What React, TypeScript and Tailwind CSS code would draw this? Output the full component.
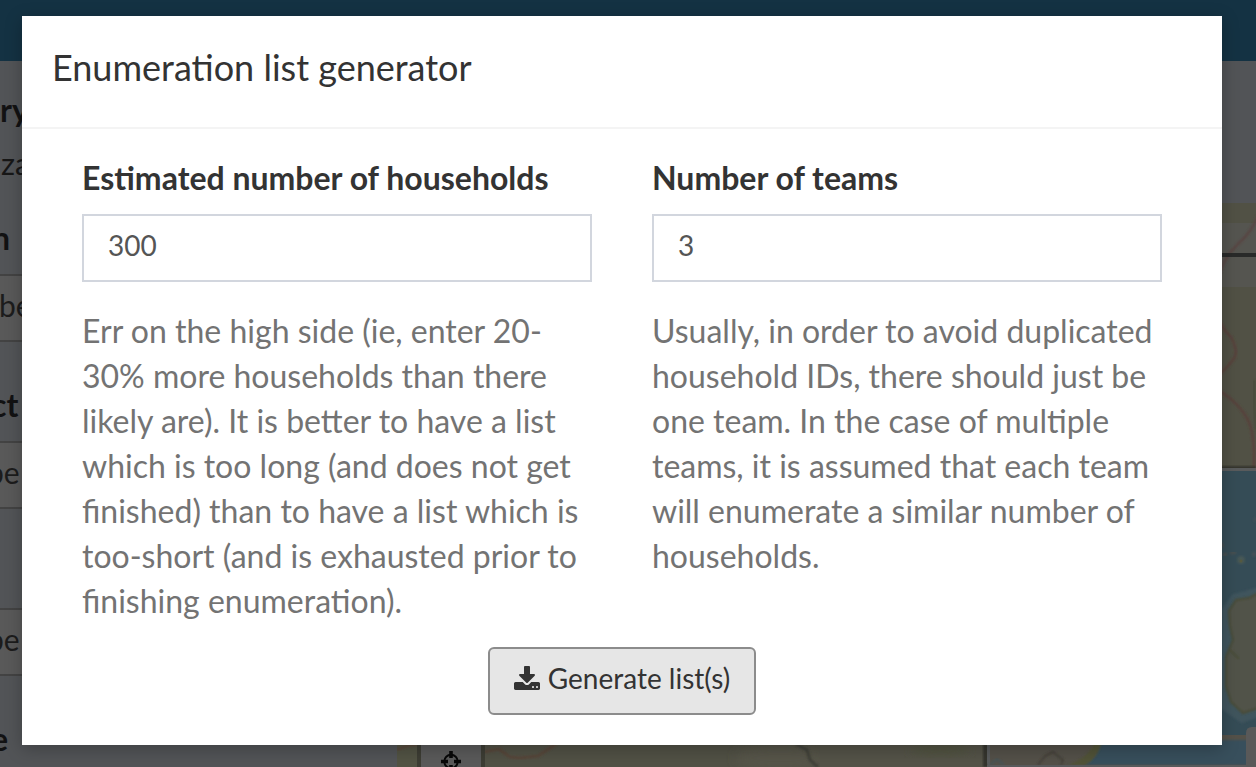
import React from "react";

function DownloadIcon() {
  return (
    <svg width="26" height="24" viewBox="0 0 1664 1536" fill="currentColor" aria-hidden="true">
      <path d="M1280 1344q0-26-19-45t-45-19-45 19-19 45 19 45 45 19 45-19 19-45zm256 0q0-26-19-45t-45-19-45 19-19 45 19 45 45 19 45-19 19-45zm128-224v320q0 40-28 68t-68 28h-1472q-40 0-68-28t-28-68v-320q0-40 28-68t68-28h465l135 136q58 56 136 56t136-56l136-136h464q40 0 68 28t28 68zm-325-569q17 41-14 70l-448 448q-18 19-45 19t-45-19l-448-448q-31-29-14-70 17-39 59-39h256v-448q0-26 19-45t45-19h256q26 0 45 19t19 45v448h256q42 0 59 39z" />
    </svg>
  );
}

/* Terrain map, in the dimmed tones it takes under the backdrop. */
function TerrainMap() {
  return (
    <svg className="block h-[564px] w-[859px]" viewBox="397 203 859 564" aria-hidden="true">
      <defs>
        <filter id="soft"><feGaussianBlur stdDeviation="1" /></filter>
        <filter id="wide"><feGaussianBlur stdDeviation="5" /></filter>
      </defs>
      <rect x="397" y="203" width="859" height="564" fill="#515145" />
      <rect x="1200" y="223" width="56" height="64" fill="#555550" />
      <rect x="397" y="740" width="24" height="27" fill="#525344" />
      <path d="M397 750Q410 744 420 745" fill="none" stroke="#5b4439" strokeWidth="2" filter="url(#soft)" />
      <path d="M1258 216Q1252 232 1237 245Q1225 257 1220 272" fill="none" stroke="#584542" strokeWidth="2.5" filter="url(#soft)" />
      <path d="M1220 322Q1225 332 1231 337Q1238 350 1235 357Q1229 366 1220 374" fill="none" stroke="#58413b" strokeWidth="2.5" filter="url(#soft)" />
      <path d="M1220 391Q1240 404 1248 420Q1255 434 1254 468" fill="none" stroke="#58413b" strokeWidth="2.5" filter="url(#soft)" />
      <path d="M1254 380V405L1256 430" fill="none" stroke="#464839" strokeWidth="2" filter="url(#soft)" />
      <rect x="1200" y="253" width="56" height="4" fill="#292a29" />
      <path d="M484 752L499 749L510 757L520 758L538 756L556 744" fill="none" stroke="#594438" strokeWidth="2.5" filter="url(#soft)" />
      <ellipse cx="780" cy="758" rx="45" ry="12" fill="#565549" filter="url(#wide)" />
      <path d="M796 744L807 750L810 760L818 767" fill="none" stroke="#3f4139" strokeWidth="3" filter="url(#soft)" />
      <rect x="820" y="740" width="166" height="27" fill="#545348" />
      <ellipse cx="940" cy="750" rx="30" ry="6" fill="#515340" filter="url(#wide)" />
      <rect x="983" y="735" width="6" height="32" fill="#34342f" filter="url(#soft)" />

      {/* Inset overview map */}
      <rect x="1200" y="466" width="56" height="4" fill="#34362f" filter="url(#soft)" />
      <rect x="1200" y="468" width="56" height="299" fill="#595b5c" />
      <rect x="1200" y="471" width="56" height="294" fill="#354c56" />
      <path d="M987 735H1256V767H991Q987 767 987 763Z" fill="#595b5c" />
      <rect x="990" y="735" width="266" height="30" fill="#545149" />
      <path d="M1084 765Q1097 758 1100 740H1256V765Z" fill="#37505b" filter="url(#soft)" />
      <path d="M1068 765Q1088 758 1095 742H1102Q1098 758 1085 765Z" fill="#515339" filter="url(#soft)" />
      <path d="M990 765L997 759L1004 765" fill="none" stroke="#465458" strokeWidth="2" filter="url(#soft)" />
      <path d="M1038 765L1045 756L1053 752L1063 760L1061 765" fill="none" stroke="#444039" strokeWidth="2" filter="url(#soft)" />
      <rect x="987" y="765" width="269" height="2" fill="#595b5c" />
      <path d="M1256 591L1234 597L1225 610L1224 650L1221 705L1242 720L1256 715Z" fill="#3f545d" stroke="#3f545d" strokeWidth="6" filter="url(#soft)" />
      <path d="M1258 593L1249 598L1236 600L1229 611L1230 626L1233 640L1226 657V686L1231 702L1243 713L1258 708Z" fill="#515348" stroke="#484b36" strokeWidth="2" filter="url(#soft)" />
      <path d="M1230 650L1239 659" stroke="#484b36" strokeWidth="2" filter="url(#soft)" />
      <circle cx="1241" cy="560" r="4" fill="#475856" filter="url(#soft)" />
      <circle cx="1241" cy="561" r="1.5" fill="#55593f" />
      <path d="M1223 555L1227 554M1230 553L1236 552.5" stroke="#4a4f4f" strokeWidth="3" filter="url(#soft)" />
      <path d="M1254 519L1256 519.5M1252 554L1256 554.5" stroke="#455156" strokeWidth="4" filter="url(#soft)" />
      <path d="M1220 542L1224 547" stroke="#4a4b49" strokeWidth="2" filter="url(#soft)" />
      <path d="M1246 767V733Q1246 727 1252 727H1256V767Z" fill="#595959" />

      {/* Locate control */}
      <rect x="417" y="735" width="68" height="32" fill="#3d3d34" />
      <rect x="421" y="735" width="60" height="32" fill="#5a5a5a" />
      <g fill="none" stroke="#080808">
        <circle cx="451" cy="761.5" r="6.7" strokeWidth="2" />
        <path d="M451 751V758M451 765V772M441 761.5H448M454 761.5H461" strokeWidth="3.6" />
      </g>
    </svg>
  );
}

function SideLabel({ children }: { children: React.ReactNode }) {
  return <div className="h-[45px] text-[32px] leading-[45px] font-bold whitespace-nowrap text-[#121213]">{children}</div>;
}

function SideInput({ children }: { children: React.ReactNode }) {
  return (
    <div className="h-[68px] w-[367px] border-y-2 border-[#434343] bg-[#595959] text-[30px] leading-[58px] whitespace-nowrap text-[#1c1c1c]">
      {children}
    </div>
  );
}

function Page() {
  return (
    <div className="flex h-full flex-col bg-[#525457]" aria-hidden="true">
      <div className="h-[61px] shrink-0 bg-[#143243]" />
      <div className="flex flex-1">
        <div className="w-[397px] shrink-0 pt-[26px]">
          <SideLabel>ry</SideLabel>
          <div className="mt-[9px] h-[45px] pl-[1px] text-[31px] leading-[45px] text-[#171717]">za</div>
          <div className="-ml-[8px] mt-[29px]"><SideLabel>n</SideLabel></div>
          <div className="mt-[14px]"><SideInput><span className="-ml-[1px]">be</span></SideInput></div>
          <div className="-ml-[9px] mt-[40px]"><SideLabel>ct</SideLabel></div>
          <div className="mt-[14px]"><SideInput><span className="-ml-[13px]">be</span></SideInput></div>
          <div className="mt-[99px]"><SideInput><span className="-ml-[13px]">be</span></SideInput></div>
          <div className="-ml-[9px] mt-[40px]"><SideLabel>e</SideLabel></div>
        </div>
        <div className="pt-[142px]"><TerrainMap /></div>
      </div>
    </div>
  );
}

function Field({ label, value, help }: { label: string; value: string; help: string }) {
  return (
    <div className="w-[570px] px-[30px]">
      <label className="block text-[32px] leading-[45px] font-bold text-[#333]">
        {label}
        <input
          className="mt-[14px] block h-[68px] w-full border-2 border-[#d2d6de] bg-white px-6 pt-0 pb-[6px] text-[28px] font-normal text-[#555] outline-none"
          defaultValue={value}
        />
      </label>
      <p className="mt-[26px] text-[32px] leading-[45px] text-[#737373]">{help}</p>
    </div>
  );
}

export default function App() {
  return (
    <div className="relative h-[767px] w-full overflow-hidden font-['Lato','Open_Sans',sans-serif] antialiased">
      <Page />
      <div
        role="dialog"
        className="absolute top-[16px] left-[22px] flex h-[729px] w-[1200px] flex-col bg-white shadow-[0_4px_16px_rgba(0,0,0,0.25)]"
      >
        <header className="h-[113px] shrink-0 border-b-2 border-[#f4f4f4] px-[30px] pt-[26px]">
          <h4 className="text-[36px] leading-[51px] font-normal text-[#333]">Enumeration list generator</h4>
        </header>
        <div className="flex h-[490px] px-[30px] pt-[26px]">
          <Field
            label="Estimated number of households"
            value="300"
            help="Err on the high side (ie, enter 20-30% more households than there likely are). It is better to have a list which is too long (and does not get finished) than to have a list which is too-short (and is exhausted prior to finishing enumeration)."
          />
          <Field
            label="Number of teams"
            value="3"
            help="Usually, in order to avoid duplicated household IDs, there should just be one team. In the case of multiple teams, it is assumed that each team will enumerate a similar number of households."
          />
        </div>
        <div className="flex justify-center pt-[28px]">
          <button className="flex h-[68px] w-[268px] items-center justify-center gap-[8px] rounded-[6px] border-2 border-[#8c8c8c] bg-[#e6e6e6] pb-[6px] text-[28px] leading-[40px] whitespace-nowrap text-[#333]">
            <DownloadIcon />
            <span>Generate list(s)</span>
          </button>
        </div>
      </div>
    </div>
  );
}
